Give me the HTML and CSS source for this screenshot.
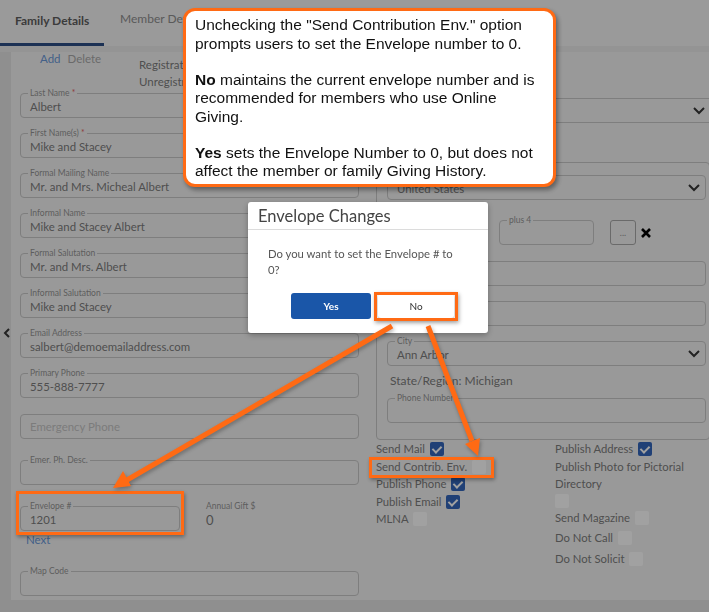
FILE: index.html
```html
<!DOCTYPE html>
<html lang="en">
<head>
  <meta charset="UTF-8" />
  <meta name="viewport" content="width=device-width, initial-scale=1.0" />
  <title>Family Details</title>
  <link rel="stylesheet" href="styles.css">
</head>
<body>
  <header class="abas">
    <a class="aba ativo">Family Details</a>
    <a class="aba">Member Details</a>
  </header>
  <div class="faixa"></div>

  <div class="pagina">
    <div class="lateral">
      <svg class="voltar" width="8" height="10" viewBox="0 0 8 10"><path d="M6 1 L2 5 L6 9" fill="none" stroke="#363636" stroke-width="2"/></svg>
    </div>

    <main class="painel">
      <section class="col-esq">
        <div class="topo">
          <div class="acoes"><a class="add">Add</a><a class="del">Delete</a></div>
          <div class="registro">
            <p>Registration Date: 03/14/2004</p>
            <p>Unregistration Date:</p>
          </div>
        </div>

        <div class="campo"><span class="rotulo">Last Name <b>*</b></span><span class="valor">Albert</span></div>
        <div class="campo"><span class="rotulo">First Name(s) <b>*</b></span><span class="valor">Mike and Stacey</span></div>
        <div class="campo"><span class="rotulo">Formal Mailing Name</span><span class="valor">Mr. and Mrs. Micheal Albert</span></div>
        <div class="campo"><span class="rotulo">Informal Name</span><span class="valor">Mike and Stacey Albert</span></div>
        <div class="campo"><span class="rotulo">Formal Salutation</span><span class="valor">Mr. and Mrs. Albert</span></div>
        <div class="campo"><span class="rotulo">Informal Salutation</span><span class="valor">Mike and Stacey</span></div>
        <div class="campo"><span class="rotulo">Email Address</span><span class="valor">salbert@demoemailaddress.com</span></div>
        <div class="campo"><span class="rotulo">Primary Phone</span><span class="valor">555-888-7777</span></div>
        <div class="campo emergencia"><span class="vazio">Emergency Phone</span></div>
        <div class="campo desc"><span class="rotulo">Emer. Ph. Desc.</span></div>

        <div class="linha-envelope">
          <div class="campo envelope"><span class="rotulo">Envelope #</span><span class="valor">1201</span></div>
          <div class="presente">
            <span class="rotulo-solto">Annual Gift $</span>
            <span class="valor">0</span>
          </div>
        </div>
        <a class="proximo">Next</a>

        <div class="campo mapa"><span class="rotulo">Map Code</span></div>
      </section>

      <section class="col-dir">
        <div class="campo selecao primeira"><span class="valor"></span><svg class="seta" width="12" height="8" viewBox="0 0 12 8"><path d="M1 1 L6 6 L11 1" fill="none" stroke="#363636" stroke-width="2"/></svg></div>

        <div class="endereco">
          <div class="campo selecao"><span class="valor">United States</span><svg class="seta" width="12" height="8" viewBox="0 0 12 8"><path d="M1 1 L6 6 L11 1" fill="none" stroke="#363636" stroke-width="2"/></svg></div>

          <div class="linha-cep">
            <div class="campo cep"></div>
            <div class="campo mais4"><span class="rotulo">plus 4</span></div>
            <div class="botao-busca">...</div>
            <svg class="fechar" width="12" height="12" viewBox="0 0 12 12"><path d="M2 2 L10 10 M10 2 L2 10" stroke="#000" stroke-width="2.6"/></svg>
          </div>

          <div class="campo"></div>
          <div class="campo"></div>
          <div class="campo selecao"><span class="rotulo">City</span><span class="valor">Ann Arbor</span><svg class="seta" width="12" height="8" viewBox="0 0 12 8"><path d="M1 1 L6 6 L11 1" fill="none" stroke="#363636" stroke-width="2"/></svg></div>
          <p class="estado">State/Region: Michigan</p>
          <div class="campo telefone"><span class="rotulo">Phone Number</span></div>
        </div>

        <div class="opcoes">
          <div class="grupo">
            <label class="opcao">Send Mail <span class="chk marcado"></span></label>
            <label class="opcao">Send Contrib. Env. <span class="chk"></span></label>
            <label class="opcao">Publish Phone <span class="chk marcado"></span></label>
            <label class="opcao">Publish Email <span class="chk marcado"></span></label>
            <label class="opcao">MLNA <span class="chk"></span></label>
          </div>
          <div class="grupo">
            <label class="opcao">Publish Address <span class="chk marcado"></span></label>
            <label class="opcao foto">Publish Photo for Pictorial Directory<br><span class="chk"></span></label>
            <label class="opcao">Send Magazine <span class="chk"></span></label>
            <label class="opcao espaco">Do Not Call <span class="chk"></span></label>
            <label class="opcao espaco">Do Not Solicit <span class="chk"></span></label>
          </div>
        </div>
      </section>
    </main>
  </div>

  <div class="fundo-modal"></div>

  <div class="dialogo">
    <h3>Envelope Changes</h3>
    <p>Do you want to set the Envelope # to 0?</p>
    <div class="botoes">
      <button class="sim">Yes</button>
      <button class="nao">No</button>
    </div>
  </div>

  <div class="balao">
    <p>Unchecking the "Send Contribution Env." option prompts users to set the Envelope number to 0.</p>
    <p><b>No</b> maintains the current envelope number and is recommended for members who use Online Giving.</p>
    <p><b>Yes</b> sets the Envelope Number to 0, but does not affect the member or family Giving History.</p>
  </div>

  <!-- destaques laranja -->
  <div class="destaque d-nao"></div>
  <div class="destaque d-envelope"></div>
  <div class="destaque d-contrib"></div>

  <svg class="setas" width="709" height="612" viewBox="0 0 709 612">
    <line x1="392" y1="326" x2="127" y2="480" stroke="#ff6a14" stroke-width="5"/>
    <polygon points="113,488 131,486 123,471" fill="#ff6a14"/>
    <line x1="428" y1="326" x2="472" y2="441" stroke="#ff6a14" stroke-width="5"/>
    <polygon points="478,456 480,438 465,444" fill="#ff6a14"/>
  </svg>
</body>
</html>
```

FILE: styles.css
```css
:root {
  --painel: #f3f3f3;
  --borda: #c8c8c8;
  --texto: #7d7d7d;
  --rotulo: #959595;
  --azul: #6a98d8;
  --marinho: #2d4f86;
  --laranja: #ff6a14;
}

* {
  margin: 0;
  padding: 0;
  box-sizing: border-box;
}

body {
  font-family: 'Lato', 'Noto Sans', sans-serif;
  background: #e2e2e2;
  color: var(--texto);
  width: 709px;
  height: 612px;
  overflow: hidden;
}

a {
  text-decoration: none;
}

/* abas */
.abas {
  height: 46px;
  background: #f4f4f4;
  display: flex;
  align-items: flex-start;
}

.aba {
  font-size: 12px;
  color: #8f8f8f;
  padding: 11px 16px 0 16px;
  height: 46px;
}

.aba.ativo {
  color: #5e5e5e;
  font-weight: 700;
  width: 104px;
  padding: 13px 0 0 15px;
  border-bottom: 3px solid var(--marinho);
}

.faixa {
  height: 6px;
  background: #ebebeb;
}

.pagina {
  display: flex;
  height: 548px;
}

.lateral {
  width: 11px;
  padding-top: 270px;
  padding-left: 3px;
}

.painel {
  flex: 1;
  background: var(--painel);
  padding: 0 0 0 9px;
  display: flex;
  gap: 17px;
}

/* coluna esquerda */
.col-esq {
  width: 339px;
  flex-shrink: 0;
  display: flex;
  flex-direction: column;
}

.topo {
  height: 41px;
  flex-shrink: 0;
  display: flex;
}

.acoes {
  padding-left: 20px;
  width: 119px;
  font-size: 11.5px;
  line-height: 13px;
  display: flex;
  gap: 7px;
}

.add { color: var(--azul); }
.del { color: #a9a9a9; }

.registro {
  padding-top: 4px;
  font-size: 11.5px;
  line-height: 17px;
  white-space: nowrap;
}

.campo {
  position: relative;
  height: 25px;
  border: 1px solid var(--borda);
  border-radius: 4px;
  display: flex;
  align-items: center;
  padding: 2px 9px 0;
  margin-bottom: 15px;
  flex-shrink: 0;
}

.rotulo {
  position: absolute;
  top: -6px;
  left: 7px;
  padding: 0 2px;
  background: var(--painel);
  font-size: 8.5px;
  line-height: 10px;
  color: var(--rotulo);
}

.rotulo b {
  color: #e06060;
  font-weight: normal;
}

.valor {
  font-size: 11.4px;
  white-space: nowrap;
}

.vazio {
  font-size: 11.4px;
  color: #c4c4c4;
}

.emergencia { margin-top: 1px; padding-top: 0; }
.desc { margin-top: 6px; }

.linha-envelope {
  display: flex;
  margin-top: 6px;
}

.envelope {
  width: 160px;
  margin-bottom: 0;
}

.presente {
  margin-left: 26px;
  display: flex;
  flex-direction: column;
}

.rotulo-solto {
  font-size: 8.5px;
  line-height: 10px;
  color: var(--rotulo);
  margin-top: -5px;
  margin-bottom: 1px;
}

.presente .valor {
  font-size: 13px;
}

.proximo {
  color: var(--azul);
  font-size: 11.5px;
  line-height: 14px;
  margin: 2px 0 0 6px;
}

.mapa { margin-top: 24px; }

/* coluna direita */
.col-dir {
  width: 340px;
  flex-shrink: 0;
  padding-top: 46px;
  display: flex;
  flex-direction: column;
}

.selecao {
  justify-content: space-between;
}

.seta {
  flex-shrink: 0;
  margin-top: -2px;
}

.primeira {
  margin-bottom: 39px;
  padding-right: 10px;
}

.endereco {
  width: 334px;
  border: 1px solid var(--borda);
  border-radius: 4px;
  padding: 12px 3px 16px 10px;
  display: flex;
  flex-direction: column;
}

.endereco .selecao {
  padding-right: 5px;
}

.linha-cep {
  display: flex;
  align-items: center;
  margin: 5px 0 16px;
}

.linha-cep .campo {
  margin-bottom: 0;
}

.cep { width: 100px; }

.mais4 {
  width: 95px;
  margin-left: 12px;
}

.botao-busca {
  width: 26px;
  height: 25px;
  margin-left: 16px;
  border: 1px solid #a8a8a8;
  border-radius: 3px;
  font-size: 9px;
  color: var(--rotulo);
  display: flex;
  align-items: center;
  justify-content: center;
}

.fechar {
  margin-left: 4px;
}

.estado {
  font-size: 12px;
  line-height: 18px;
  margin: -9px 0 8px 3px;
}

.telefone {
  margin-bottom: 0;
}

/* opcoes */
.opcoes {
  display: flex;
}

.grupo {
  width: 179px;
  flex-shrink: 0;
  display: flex;
  flex-direction: column;
  font-size: 11.3px;
}

.opcao {
  line-height: 17.5px;
  white-space: nowrap;
}

.opcao.foto {
  white-space: normal;
  width: 150px;
  line-height: 17px;
}

.opcao.espaco {
  margin-top: 3px;
}

.chk {
  display: inline-block;
  width: 14px;
  height: 14px;
  border-radius: 2px;
  background: #ffffff;
  vertical-align: -3px;
  margin-left: 2px;
  position: relative;
}

.foto .chk {
  margin: 2px 0 0;
}

.chk.marcado {
  background: #3366bb;
}

.chk.marcado::after {
  content: "";
  position: absolute;
  left: 4px;
  top: 2px;
  width: 4px;
  height: 7px;
  border: solid #fff;
  border-width: 0 2px 2px 0;
  transform: rotate(45deg);
}

/* modal */
.fundo-modal {
  position: fixed;
  inset: 0;
  background: rgba(0, 0, 0, 0.37);
}

.dialogo {
  position: fixed;
  left: 248px;
  top: 202px;
  width: 240px;
  height: 131px;
  background: #fff;
  border-radius: 3px;
  box-shadow: 0 2px 6px rgba(0, 0, 0, 0.3);
}

.dialogo h3 {
  font-weight: normal;
  font-size: 16.5px;
  color: #444;
  height: 28px;
  padding: 4px 0 0 10px;
  border-bottom: 1px solid #dcdcdc;
}

.dialogo p {
  font-size: 11.3px;
  line-height: 16px;
  color: #555;
  padding: 16px 30px 0 20px;
  height: 63px;
}

.botoes {
  display: flex;
  align-items: center;
  gap: 7px;
  padding-left: 43px;
}

.botoes button {
  font-family: 'Lato', sans-serif;
  font-size: 10px;
  border: none;
  border-radius: 3px;
}

.sim {
  width: 80px;
  height: 26px;
  background: #1a56a8;
  color: #fff;
  font-weight: bold;
}

.nao {
  width: 76px;
  height: 24px;
  background: #fff;
  color: #333;
  box-shadow: 0 1px 4px rgba(0, 0, 0, 0.35);
}

/* balao de explicacao */
.balao {
  position: fixed;
  left: 183px;
  top: 8px;
  width: 373px;
  height: 179px;
  background: #fff;
  border: 3px solid var(--laranja);
  border-radius: 12px;
  box-shadow: 2px 3px 5px rgba(0, 0, 0, 0.4);
  padding: 5px 10px 0 9px;
  font-family: 'Liberation Sans', Arial, sans-serif;
  font-size: 15.5px;
  line-height: 18.5px;
  color: #111;
}

.balao p {
  margin-bottom: 17.5px;
}

.destaque {
  position: fixed;
  border: 3px solid var(--laranja);
  box-shadow: 1px 2px 4px rgba(0, 0, 0, 0.35);
}

.d-nao {
  left: 374px;
  top: 292px;
  width: 84px;
  height: 29px;
}

.d-envelope {
  left: 16px;
  top: 491px;
  width: 168px;
  height: 44px;
}

.d-contrib {
  left: 369px;
  top: 457px;
  width: 125px;
  height: 21px;
}

.setas {
  position: fixed;
  left: 0;
  top: 0;
  filter: drop-shadow(1px 2px 2px rgba(0, 0, 0, 0.3));
}
```
